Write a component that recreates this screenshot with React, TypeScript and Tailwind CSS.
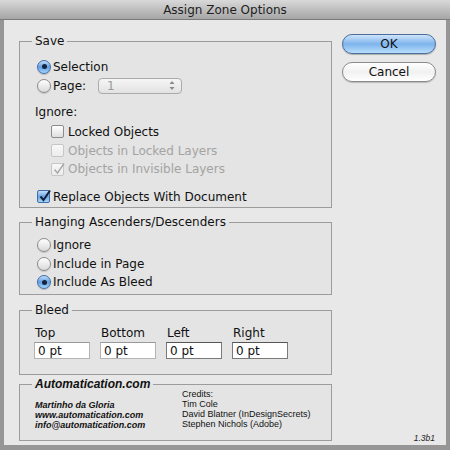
const ui = { fontFamily: '"DejaVu Sans", "Liberation Sans", sans-serif' };
const small = { fontFamily: '"Liberation Sans", Arial, sans-serif' };

const Radio = ({ on }: { on?: boolean }) =>
  on ? (
    <span className="flex h-[14px] w-[14px] shrink-0 items-center justify-center rounded-full border border-[#3f6ea8] bg-linear-to-b from-[#c4dcf6] via-[#5f9fe4] to-[#a6d4fb] shadow-[0_1px_1px_rgba(0,0,0,0.2)]">
      <span className="h-[5px] w-[5px] rounded-full bg-[#16233a]" />
    </span>
  ) : (
    <span className="h-[14px] w-[14px] shrink-0 rounded-full border border-[#8c8c8c] bg-linear-to-b from-[#ffffff] to-[#d9d9d9] shadow-[0_1px_1px_rgba(0,0,0,0.15)]" />
  );

const Check = ({ on, disabled }: { on?: boolean; disabled?: boolean }) => {
  const box = on && !disabled
    ? "border-[#3f6ea8] bg-linear-to-b from-[#c4dcf6] via-[#6aa6e6] to-[#a6d4fb]"
    : disabled
    ? "border-[#c6c6c6] bg-linear-to-b from-[#f8f8f8] to-[#ececec]"
    : "border-[#8c8c8c] bg-linear-to-b from-[#ffffff] to-[#dedede]";
  return (
    <span className={`relative h-[13px] w-[13px] shrink-0 rounded-[2px] border ${box}`}>
      {on && (
        <svg viewBox="0 0 14 14" className="absolute -top-[2px] left-[0px] h-[14px] w-[14px]">
          <path
            d="M2.5 7.5 L5.5 11 L12 1.5"
            fill="none"
            stroke={disabled ? "#a8a8a8" : "#14213a"}
            strokeWidth={disabled ? 1.4 : 2}
          />
        </svg>
      )}
    </span>
  );
};

const Field = ({ value, dark }: { value: string; dark?: boolean }) => (
  <div
    className={`flex h-[17px] w-[56px] items-center border bg-white pl-[3px] text-[12px] text-[#111] ${
      dark ? "border-[#7a7a7a] border-t-[#555]" : "border-[#b4b4b4] border-t-[#999]"
    }`}
  >
    {value}
  </div>
);

export default function App() {
  return (
    <div className="flex h-[450px] w-[450px] flex-col bg-[#969696]" style={ui}>
      <div className="flex h-[20px] shrink-0 items-center justify-center border-b border-[#7a7a7a] bg-linear-to-b from-[#d9d9d9] to-[#a6a6a6] text-[12px] text-[#1e1e1e]">
        Assign Zone Options
      </div>

      <div className="mx-[4px] mb-[5px] flex flex-1 bg-[#e8e8e8] pl-[15px] pr-[10px] text-[12px] text-[#111]">
        {/* left column */}
        <div className="flex w-[313px] flex-col pt-[14px]">
          <fieldset className="h-[174px] border border-[#9c9c9c] bg-[#e4e4e4] pl-[12px]">
            <legend className="px-[3px] leading-[15px]">Save</legend>
            <div className="mt-[8px] flex h-[19px] items-center gap-[2px] pl-[5px]">
              <Radio on />
              <span>Selection</span>
            </div>
            <div className="flex h-[19px] items-center gap-[2px] pl-[5px]">
              <Radio />
              <span className="w-[43px]">Page:</span>
              <div className="flex h-[16px] w-[84px] items-center justify-between rounded-[4px] border border-[#ababab] bg-linear-to-b from-[#f6f6f6] to-[#e2e2e2] pl-[8px] pr-[6px] text-[#9a9a9a]">
                <span>1</span>
                <svg viewBox="0 0 6 11" className="h-[11px] w-[6px]">
                  <path d="M3 1 L5.5 4 L0.5 4 Z" fill="#8a8a8a" />
                  <path d="M3 10 L5.5 7 L0.5 7 Z" fill="#8a8a8a" />
                </svg>
              </div>
            </div>
            <div className="mt-[7px] flex h-[20px] items-center pl-[3px]">Ignore:</div>
            <div className="flex h-[19px] items-center gap-[4px] pl-[19px]">
              <Check />
              <span>Locked Objects</span>
            </div>
            <div className="flex h-[19px] items-center gap-[4px] pl-[19px] text-[#a3a3a3]">
              <Check disabled />
              <span>Objects in Locked Layers</span>
            </div>
            <div className="flex h-[18px] items-center gap-[4px] pl-[19px] text-[#a3a3a3]">
              <Check on disabled />
              <span>Objects in Invisible Layers</span>
            </div>
            <div className="mt-[9px] flex h-[19px] items-center gap-[3px] pl-[5px]">
              <Check on />
              <span>Replace Objects With Document</span>
            </div>
          </fieldset>

          <fieldset className="mt-[7px] h-[80px] border border-[#9c9c9c] bg-[#e4e4e4] pl-[12px]">
            <legend className="px-[3px] leading-[15px]">Hanging Ascenders/Descenders</legend>
            <div className="mt-[5px] flex h-[19px] items-center gap-[2px] pl-[5px]">
              <Radio />
              <span>Ignore</span>
            </div>
            <div className="flex h-[19px] items-center gap-[2px] pl-[5px]">
              <Radio />
              <span>Include in Page</span>
            </div>
            <div className="flex h-[18px] items-center gap-[2px] pl-[5px]">
              <Radio on />
              <span>Include As Bleed</span>
            </div>
          </fieldset>

          <fieldset className="mt-[8px] h-[72px] border border-[#9c9c9c] bg-[#e4e4e4] pl-[12px]">
            <legend className="px-[3px] leading-[15px]">Bleed</legend>
            <div className="mt-[8px] flex gap-[10px] pl-[2px]">
              {[
                ["Top", "0 pt", false],
                ["Bottom", "0 pt", false],
                ["Left", "0 pt", true],
                ["Right", "0 pt", true],
              ].map(([label, value, dark]) => (
                <div key={label as string} className="flex w-[56px] flex-col gap-[1px]">
                  <span className="pl-[1px] leading-[15px]">{label as string}</span>
                  <Field value={value as string} dark={dark as boolean} />
                </div>
              ))}
            </div>
          </fieldset>

          <fieldset className="mt-[3px] h-[63px] border border-[#9c9c9c] bg-[#e4e4e4] pl-[12px]" style={small}>
            <legend className="px-[3px] text-[12px] font-bold italic leading-[12px] text-[#111]">
              Automatication.com
            </legend>
            <div className="flex text-[9px] leading-[10px] text-[#111]">
              <div className="mt-[10px] w-[150px] pl-[3px] font-bold italic">
                <div>Martinho da Gloria</div>
                <div>www.automatication.com</div>
                <div>info@automatication.com</div>
              </div>
              <div className="-mt-[1px]">
                <div>Credits:</div>
                <div>Tim Cole</div>
                <div>David Blatner (InDesignSecrets)</div>
                <div>Stephen Nichols (Adobe)</div>
              </div>
            </div>
          </fieldset>
        </div>

        {/* right column */}
        <div className="ml-[10px] flex w-[94px] flex-col pt-[14px]">
          <button className="flex h-[20px] items-center justify-center rounded-full border border-[#4a6d9c] bg-linear-to-b from-[#cfe4fa] via-[#7db4ec] to-[#b9defc] text-[12px] text-[#111] shadow-[0_1px_1px_rgba(0,0,0,0.25)]">
            OK
          </button>
          <button className="mt-[8px] flex h-[20px] items-center justify-center rounded-full border border-[#8a8a8a] bg-linear-to-b from-[#ffffff] via-[#f1f1f1] to-[#ffffff] text-[12px] text-[#111] shadow-[0_1px_1px_rgba(0,0,0,0.2)]">
            Cancel
          </button>
          <div className="mt-auto pr-[1px] text-right text-[8.5px] italic text-[#222]" style={small}>
            1.3b1
          </div>
        </div>
      </div>
    </div>
  );
}
